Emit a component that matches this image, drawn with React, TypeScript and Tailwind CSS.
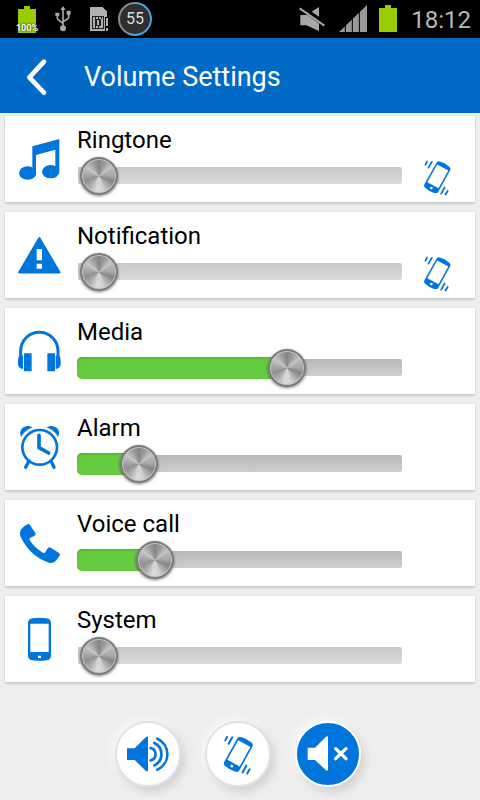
import { ReactNode, useState } from "react";

type Mode = "sound" | "vibrate" | "mute";

interface Channel {
    id: string;
    label: string;
    value: number;
    max: number;
    icon: ReactNode;
    canVibrate?: boolean;
}

const THUMB = 38;

function MusicIcon() {
    return (
        <svg viewBox="0 0 132 132" className="size-11" fill="#0075dc" aria-hidden="true">
            <path d="M46 28 127 6V104H115V38L57 54V108H46Z" />
            <ellipse cx="32" cy="108" rx="26" ry="20" />
            <ellipse cx="101" cy="104" rx="26" ry="20" />
        </svg>
    );
}

function WarningIcon() {
    return (
        <svg viewBox="0 0 132 132" className="size-11" aria-hidden="true">
            <path
                d="M67 16 127 118H7Z"
                fill="#0075dc"
                stroke="#0075dc"
                strokeWidth="7"
                strokeLinejoin="round"
            />
            <path d="M59 48H75V82H59ZM59 92H75V107H59Z" fill="#fff" />
        </svg>
    );
}

function HeadphonesIcon() {
    return (
        <svg viewBox="0 0 132 132" className="size-11" fill="#0075dc" aria-hidden="true">
            <path
                d="M11 84V66A56 56 0 0 1 123 66V84"
                fill="none"
                stroke="#0075dc"
                strokeWidth="9"
            />
            <path d="M18 80V120Q3 118 3 104V92Q4 82 9 78ZM116 80V120Q131 118 131 104V92Q130 82 125 78Z" />
            <rect x="21" y="73" width="23" height="54" rx="2" />
            <rect x="91" y="73" width="23" height="54" rx="2" />
        </svg>
    );
}

function AlarmIcon() {
    return (
        <svg viewBox="0 0 132 132" className="size-11" aria-hidden="true">
            <g fill="none" stroke="#0075dc" strokeLinecap="round" strokeLinejoin="round">
                <circle cx="68" cy="67" r="52" strokeWidth="8" />
                <path d="M66 31V68L95 84" strokeWidth="11" />
                <path d="M36 108 26 127M102 108 111 127" strokeWidth="10" />
            </g>
            <path
                d="M13 36C6 22 11 9 23 5C32 1 41 3 47 8C32 12 19 22 13 36ZM123 36C130 22 125 9 113 5C104 1 95 3 89 8C104 12 117 22 123 36Z"
                fill="#0075dc"
            />
        </svg>
    );
}

function CallIcon() {
    return (
        <svg viewBox="0 0 132 132" className="size-11" fill="#0075dc" aria-hidden="true">
            <path d="M34 9Q37 8 39 12L55 36Q58 41 53 44L40 50Q36 53 38 57Q52 80 78 95Q83 98 85 93L92 82Q96 77 101 80L126 96Q131 99 128 104L118 118Q110 128 96 125Q40 108 10 46Q7 34 12 25Q20 14 34 9Z" />
        </svg>
    );
}

function PhoneIcon() {
    return (
        <svg viewBox="0 0 132 132" className="size-11" aria-hidden="true">
            <path
                d="M47 4Q67 1 88 4Q101 5 102 18V116Q101 129 88 130Q67 133 47 130Q34 129 33 116V18Q34 5 47 4Z"
                fill="#0075dc"
            />
            <path d="M40 20H95V105H40ZM63 116H72V123H63Z" fill="#fff" />
        </svg>
    );
}

function VibrateIcon({ className }: { className: string }) {
    return (
        <svg viewBox="0 0 132 132" className={className} aria-hidden="true">
            <g transform="translate(67 67) rotate(29)">
                <path
                    d="M-16 -50Q0 -54 16 -50Q26 -49 26 -40V40Q26 49 16 50Q0 54 -16 50Q-26 49 -26 40V-40Q-26 -49 -16 -50Z"
                    fill="#0075dc"
                />
                <path d="M-21 -37H21V30H-21ZM-4 37H4V44H-4Z" fill="#fff" />
            </g>
            <path
                d="M28 25 33 15M38 35 49 16M80 121 91 101M94 124 101 112"
                stroke="#0075dc"
                strokeWidth="6"
                strokeLinecap="round"
            />
        </svg>
    );
}

function SpeakerIcon() {
    return (
        <svg viewBox="0 0 144 144" className="size-12" aria-hidden="true">
            <path d="M9 55H32L66 21Q70 18 72 22V122Q70 126 66 123L32 90H9Z" fill="#0075dc" />
            <path
                d="M80 54A19 19 0 0 1 80 91M91 39A37 37 0 0 1 91 106M100 26A51 51 0 0 1 100 119"
                fill="none"
                stroke="#0075dc"
                strokeWidth="8"
                strokeLinecap="round"
            />
        </svg>
    );
}

function SpeakerOffIcon() {
    return (
        <svg viewBox="0 0 144 144" className="size-12" aria-hidden="true">
            <path d="M11 53H33L66 20Q70 17 72 21V120Q70 124 66 121L33 90H11Z" fill="#fff" />
            <path
                d="M95 56 126 86M126 56 95 86"
                stroke="#fff"
                strokeWidth="10"
                strokeLinecap="round"
            />
        </svg>
    );
}

function StatusBar() {
    return (
        <div className="flex h-[38px] items-center justify-between bg-black px-[9px]">
            <div className="flex items-center">
                <div className="grid w-9 place-items-center">
                    <svg viewBox="0 -1 18 28" className="h-7 w-[18px] [grid-area:1/1]" aria-hidden="true">
                        <path d="M6 0H12V3H18V27H0V3H6Z" fill="#99cc00" />
                    </svg>
                    <span className="self-end text-[9px] leading-[10px] font-bold text-white [grid-area:1/1] [text-shadow:0_0_2px_#000]">
                        100%
                    </span>
                </div>
                <div className="flex w-9 justify-center">
                    <svg viewBox="0 0 48 78" className="h-[26px] w-4" fill="none" stroke="#a8a8a8" strokeWidth="5" aria-hidden="true">
                        <path d="M24 8V68M7 26V36Q7 40 11 42L24 52M41 20V32Q41 36 37 39L24 47" />
                        <circle cx="24" cy="67" r="9" fill="#a8a8a8" stroke="none" />
                        <path d="M24 0 32 12H16ZM1 20H13V30H1ZM35 14H47V26H35Z" fill="#a8a8a8" stroke="none" />
                    </svg>
                </div>
                <div className="flex w-9 justify-center">
                    <svg viewBox="0 -2 18 28" className="h-7 w-[18px]" shapeRendering="crispEdges" aria-hidden="true">
                        <path d="M0 0H12L17 5V24H0Z" fill="#b0b0b0" />
                        <path d="M2.5 9.5H13.5V21.5H2.5Z" fill="none" stroke="#222" />
                        <path d="M5 12H11V19H5Z" fill="#222" />
                        <path d="M7 13H9V18H7Z" fill="#b0b0b0" />
                        <path d="M5 10H6V12H5ZM8 10H9V12H8ZM11 10H12V12H11ZM5 19H6V21H5ZM8 19H9V21H8Z" fill="#222" />
                        <path d="M15 10H18V25H15Z" fill="#000" />
                        <path d="M16 11H18V19H16ZM16 21H18V24H16Z" fill="#b0b0b0" />
                    </svg>
                </div>
                <div className="flex size-9 items-center justify-center">
                    <div className="flex size-[34px] items-center justify-center rounded-full bg-[conic-gradient(#4aa3df_0_55%,#8a8a8a_55%_100%)]">
                        <span className="flex size-[30px] items-center justify-center rounded-full bg-[#2d2f30] text-base text-[#dedede]">
                            55
                        </span>
                    </div>
                </div>
            </div>
            <div className="flex items-center text-[#b8b8b8]">
                <svg viewBox="0 -3 78 78" className="mr-3.5 size-[26px]" aria-hidden="true">
                    <path d="M4 24H22L60 0V72L22 55H4Z" fill="#a8a8a8" />
                    <path d="M0 -4 80 54" stroke="#000" strokeWidth="16" />
                    <path d="M2 4 76 56" stroke="#a8a8a8" strokeWidth="6" />
                </svg>
                <svg viewBox="0 0 84 84" className="mr-3 size-7" aria-hidden="true">
                    <path d="M0 81 84 0V81Z" fill="#999" />
                    <path d="M19 50V81M40 30V81M61 10V81" stroke="#000" strokeWidth="3" />
                </svg>
                <svg viewBox="0 0 18 28" className="mr-3.5 h-7 w-[18px]" aria-hidden="true">
                    <path d="M6 0H12V3H18V27H0V3H6Z" fill="#99cc00" />
                </svg>
                <span className="pt-0.5 text-2xl leading-8">18:12</span>
            </div>
        </div>
    );
}

function VolumeSlider({
    id,
    value,
    max,
    onChange,
}: {
    id: string;
    value: number;
    max: number;
    onChange: (value: number) => void;
}) {
    const ratio = value / max;
    // the fill ends under the centre of the thumb
    const fill = `calc(${THUMB / 2 + 3}px + (100% - ${THUMB + 5}px) * ${ratio})`;

    return (
        <div className="grid h-10 items-center">
            <div
                className={
                    value === 0
                        ? "mb-0.5 ml-px h-[17px] rounded-r-[2px] bg-linear-to-b from-[#c8c8c8] to-[#dadada] [grid-area:1/1]"
                        : "mb-0.5 ml-px h-[17px] rounded-r-[2px] bg-linear-to-b from-[#b9b9b9] to-[#cecece] [grid-area:1/1]"
                }
            />
            {value > 0 && (
                <div
                    className="h-[22px] rounded-l-[5px] bg-[#65cc41] shadow-[inset_0_1px_2px_#4fa832] [grid-area:1/1]"
                    style={{ width: fill }}
                />
            )}
            <input
                id={id}
                type="range"
                min={0}
                max={max}
                value={value}
                onChange={(e) => onChange(Number(e.target.value))}
                className="mr-0.5 ml-[3px] h-10 cursor-pointer appearance-none bg-transparent [grid-area:1/1] focus:outline-none [&::-webkit-slider-thumb]:size-[38px] [&::-webkit-slider-thumb]:appearance-none [&::-webkit-slider-thumb]:rounded-full [&::-webkit-slider-thumb]:border-2 [&::-webkit-slider-thumb]:border-[#7c7c7c] [&::-webkit-slider-thumb]:bg-[conic-gradient(#858585,#a0a0a0_8%,#c4c4c4_14%,#b0b0b0_19%,#a8a8a8_24%,#858585_31%,#a8a8a8_38%,#d4d4d4_46%,#d8d8d8_53%,#b0b0b0_61%,#909090_69%,#a4a4a4_76%,#c6c6c6_85%,#a0a0a0_93%,#858585)] [&::-webkit-slider-thumb]:shadow-[inset_0_0_0_1px_#c4c4c4,0_1px_3px_rgba(0,0,0,0.5)]"
            />
        </div>
    );
}

const INITIAL: Channel[] = [
    { id: "ringtone", label: "Ringtone", value: 0, max: 7, icon: <MusicIcon />, canVibrate: true },
    { id: "notification", label: "Notification", value: 0, max: 7, icon: <WarningIcon />, canVibrate: true },
    { id: "media", label: "Media", value: 10, max: 15, icon: <HeadphonesIcon /> },
    { id: "alarm", label: "Alarm", value: 1, max: 7, icon: <AlarmIcon /> },
    { id: "voice", label: "Voice call", value: 1, max: 5, icon: <CallIcon /> },
    { id: "system", label: "System", value: 0, max: 7, icon: <PhoneIcon /> },
];

const MODES: { id: Mode; name: string; icon: ReactNode }[] = [
    { id: "sound", name: "Sound", icon: <SpeakerIcon /> },
    { id: "vibrate", name: "Vibrate", icon: <VibrateIcon className="size-11" /> },
    { id: "mute", name: "Mute", icon: <SpeakerOffIcon /> },
];

export default function App() {
    const [channels, setChannels] = useState(INITIAL);
    const [mode, setMode] = useState<Mode>("mute");

    function setVolume(id: string, value: number) {
        setChannels((prev) => prev.map((c) => (c.id === id ? { ...c, value } : c)));
    }

    return (
        <div className="min-h-screen bg-[#eeeeee] font-[Roboto,'Liberation_Sans',sans-serif] text-black">
            <StatusBar />

            <header className="flex h-[75px] items-center bg-[#006ac6] text-white">
                <button type="button" aria-label="Back" className="flex h-full w-[84px] items-center pt-0.5 pl-6">
                    <svg viewBox="0 0 72 120" className="h-10 w-6" aria-hidden="true">
                        <path
                            d="M60 14 16 61 60 107"
                            fill="none"
                            stroke="#fff"
                            strokeWidth="14"
                            strokeLinecap="round"
                            strokeLinejoin="round"
                        />
                    </svg>
                </button>
                <h1 className="pt-0.5 text-[27px] leading-9">Volume Settings</h1>
            </header>

            <main className="flex flex-col gap-[10px] px-[5px] pt-[3px]">
                {channels.map((c) => (
                    <section
                        key={c.id}
                        className="flex h-[86px] bg-white shadow-[0_2px_2px_rgba(0,0,0,0.14),0_0_1px_1px_rgba(0,0,0,0.03)]"
                    >
                        <div className="flex w-[72px] shrink-0 items-center justify-center pr-1">{c.icon}</div>
                        <div className="flex min-w-0 flex-1 flex-col pt-2">
                            <label htmlFor={c.id} className="text-2xl leading-8">
                                {c.label}
                            </label>
                            <VolumeSlider
                                id={c.id}
                                value={c.value}
                                max={c.max}
                                onChange={(v) => setVolume(c.id, v)}
                            />
                        </div>
                        <div className="flex w-[73px] shrink-0 items-end justify-center pr-1 pb-[5px]">
                            {c.canVibrate && (
                                <button type="button" aria-label={`Vibrate on ${c.label}`}>
                                    <VibrateIcon className="size-10" />
                                </button>
                            )}
                        </div>
                    </section>
                ))}
            </main>

            <footer className="flex justify-center gap-6 pt-[39px] pr-1 pb-3">
                {MODES.map((m) => (
                    <button
                        key={m.id}
                        type="button"
                        aria-label={m.name}
                        aria-pressed={mode === m.id}
                        onClick={() => setMode(m.id)}
                        className={
                            mode === m.id
                                ? "flex size-[66px] items-center justify-center rounded-full border-2 border-white bg-[#0075dc] shadow-[4px_5px_8px_rgba(0,0,0,0.12),-3px_-3px_8px_#f8f8f8]"
                                : "flex size-[66px] items-center justify-center rounded-full border-2 border-[#e2e2e2] bg-white shadow-[4px_5px_8px_rgba(0,0,0,0.12),-3px_-3px_8px_#f8f8f8]"
                        }
                    >
                        {m.icon}
                    </button>
                ))}
            </footer>
        </div>
    );
}
